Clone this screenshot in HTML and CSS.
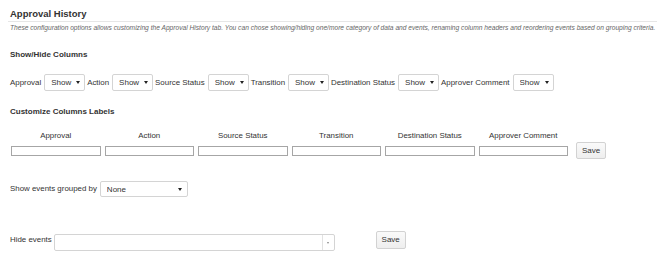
FILE: index.html
```html
<!DOCTYPE html>
<html lang="en">
<head>
    <meta charset="UTF-8">
    <meta name="viewport" content="width=device-width, initial-scale=1.0">
    <title>Approval History</title>
    <link rel="stylesheet" href="styles.css">
</head>
<body>
    <div class="page">
        <h2 class="title">Approval History</h2>
        <p class="note">These configuration options allows customizing the Approval History tab. You can chose showing/hiding one/more category of data and events, renaming column headers and reordering events based on grouping criteria.</p>

        <h4 class="section">Show/Hide Columns</h4>
        <div class="toggles">
            <label>Approval</label>
            <span class="pick"><select><option>Show</option><option>Hide</option></select></span>
            <label>Action</label>
            <span class="pick"><select><option>Show</option><option>Hide</option></select></span>
            <label>Source Status</label>
            <span class="pick"><select><option>Show</option><option>Hide</option></select></span>
            <label>Transition</label>
            <span class="pick"><select><option>Show</option><option>Hide</option></select></span>
            <label>Destination Status</label>
            <span class="pick"><select><option>Show</option><option>Hide</option></select></span>
            <label>Approver Comment</label>
            <span class="pick"><select><option>Show</option><option>Hide</option></select></span>
        </div>

        <h4 class="section section-labels">Customize Columns Labels</h4>
        <div class="labels">
            <span class="col-name">Approval</span>
            <span class="col-name">Action</span>
            <span class="col-name">Source Status</span>
            <span class="col-name">Transition</span>
            <span class="col-name">Destination Status</span>
            <span class="col-name">Approver Comment</span>
            <input type="text" class="col-input">
            <input type="text" class="col-input">
            <input type="text" class="col-input">
            <input type="text" class="col-input">
            <input type="text" class="col-input">
            <input type="text" class="col-input">
            <button class="btn btn-save-labels">Save</button>
        </div>

        <div class="group-row">
            <label>Show events grouped by</label>
            <span class="pick pick-wide"><select><option>None</option></select></span>
        </div>

        <div class="hide-row">
            <label>Hide events</label>
            <div class="multi">
                <span class="multi-field"></span>
                <span class="multi-arrow"></span>
            </div>
            <button class="btn btn-save-hide">Save</button>
        </div>
    </div>
</body>
</html>
```

FILE: styles.css
```css
body { margin: 0; font-family: "Liberation Sans", Arial, sans-serif; color: #333; background: #fff; }
.page { padding: 0 8px; }

.title {
    margin: 8px 0 0 0;
    padding: 0 0 1px 2px;
    font-size: 9.5px;
    line-height: 12px;
    font-weight: bold;
    border-bottom: 1px solid #e6e6e6;
}
.note {
    margin: 1px 0 0 2px;
    font-size: 6.65px;
    line-height: 9px;
    font-style: italic;
    color: #666;
    white-space: nowrap;
}
.section {
    margin: 18px 0 0 2px;
    font-size: 8px;
    line-height: 10px;
    font-weight: bold;
}

label { font-size: 7.9px; line-height: 10px; }

.toggles {
    display: flex;
    align-items: center;
    gap: 2px;
    margin: 14px 0 0 2px;
}
.toggles .pick { margin-left: 1px; }

.pick { position: relative; display: flex; }
.pick select {
    appearance: none;
    -webkit-appearance: none;
    box-sizing: border-box;
    width: 41px;
    height: 17px;
    margin: 0;
    padding: 0 0 0 6px;
    font-family: inherit;
    font-size: 8px;
    color: #333;
    background: #fff;
    border: 1px solid #d4d4d4;
    border-radius: 2px;
}
.pick::after {
    content: "";
    position: absolute;
    right: 5px;
    top: 7px;
    border-left: 2px solid transparent;
    border-right: 2px solid transparent;
    border-top: 3px solid #222;
    pointer-events: none;
}

.section-labels { margin-top: 16px; }
.labels {
    display: grid;
    grid-template-columns: repeat(6, 89.5px) auto;
    grid-template-rows: 10px 17px;
    column-gap: 4px;
    row-gap: 1px;
    align-items: center;
    margin: 14px 0 0 3px;
}
.col-name { text-align: center; font-size: 7.9px; line-height: 10px; }
.col-input {
    grid-row: 2;
    box-sizing: border-box;
    width: 100%;
    height: 10px;
    margin: 0;
    padding: 0;
    border: 1px solid #a6a6a6;
    background: #fff;
}
.btn {
    box-sizing: border-box;
    width: 30px;
    height: 17px;
    margin: 0;
    padding: 0;
    font-family: inherit;
    font-size: 8px;
    color: #333;
    background: linear-gradient(#fafafa, #eeeeee);
    border: 1px solid #d2d2d2;
    border-radius: 2px;
}
.btn-save-labels { grid-row: 2; grid-column: 7; margin-left: 4px; }

.group-row {
    display: flex;
    align-items: center;
    gap: 3px;
    margin: 22px 0 0 2px;
}
.pick-wide select { width: 88px; height: 16px; padding-left: 6px; }
.pick-wide::after { top: 6.5px; right: 6px; }

.hide-row {
    display: flex;
    align-items: center;
    margin: 31px 0 0 2px;
}
.multi {
    display: flex;
    box-sizing: border-box;
    width: 281px;
    height: 17px;
    margin: 6px 0 0 2px;
    border: 1px solid #d4d4d4;
    border-radius: 2px;
    background: #fff;
}
.multi-field { flex: 1; }
.multi-arrow {
    position: relative;
    width: 11px;
    border-left: 1px solid #e2e2e2;
}
.multi-arrow::after {
    content: "";
    position: absolute;
    left: 4px;
    top: 7px;
    border-left: 1.5px solid transparent;
    border-right: 1.5px solid transparent;
    border-top: 2px solid #888;
}
.btn-save-hide { margin-left: 41px; height: 18px; }
```
